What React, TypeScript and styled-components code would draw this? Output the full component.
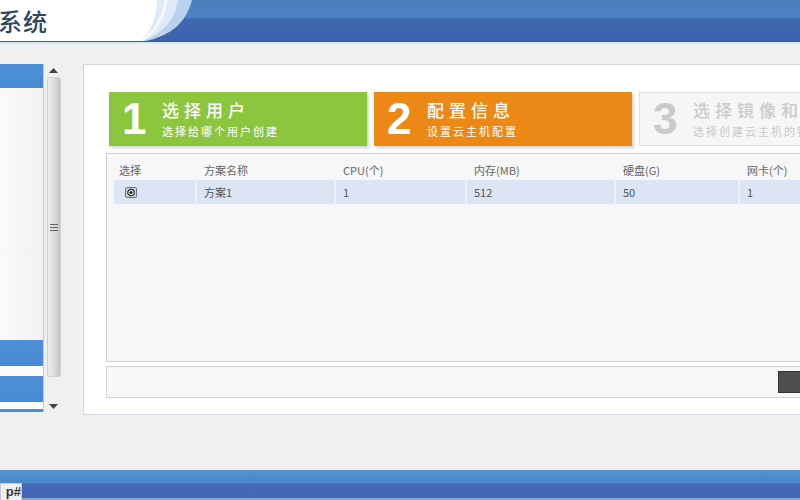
import React from "react";
import styled, { createGlobalStyle } from "styled-components";

const Global = createGlobalStyle`
  html, body { margin: 0; padding: 0; }
  body {
    width: 800px; height: 500px; overflow: hidden;
    font-family: "Noto Sans CJK SC", "Liberation Sans", sans-serif;
    background: #f0f0f0;
  }
`;

const Page = styled.div`
  width: 800px; height: 500px; display: flex; flex-direction: column; overflow: hidden;
`;

const Header = styled.header`
  height: 41px; flex-shrink: 0; display: flex;
  background: linear-gradient(to bottom, #4c7dbd 0%, #4b84c4 42%, #4068b1 46%, #3e62ad 100%);
  border-bottom: 1px solid #3d5c8e;
`;

const Brand = styled.div`
  width: 140px; background: #fff; display: flex; align-items: center;
`;

const Title = styled.h1`
  margin: 0 0 0 -2px; font-size: 24px; font-weight: 500; color: #2c4866;
  letter-spacing: 1px; line-height: 41px;
`;

const HeaderLine = styled.div`
  height: 2px; flex-shrink: 0; background: #d4e9f3;
`;

const Body = styled.main`
  flex: 1; display: flex; align-items: flex-start; padding-top: 20px; overflow: hidden;
  background: #f0f0f0;
`;

const Sidebar = styled.aside`
  width: 43px; flex-shrink: 0; display: flex; flex-direction: column;
  border-right: 1px solid #c9c9c9;
`;

const SideHead = styled.div<{ h: number }>`
  height: ${(p) => p.h}px;
  background: linear-gradient(to bottom, #4f8fd8, #468ad4);
`;

const SidePanel = styled.div<{ h: number }>`
  height: ${(p) => p.h}px;
  background: linear-gradient(to right, #fafafa, #f1f1f1);
`;

const SideGap = styled.div<{ h: number }>`
  height: ${(p) => p.h}px; background: #fbfbfb;
`;

const Scrollbar = styled.div`
  width: 15px; margin-left: 2px; height: 348px; display: flex; flex-direction: column;
  align-items: center; flex-shrink: 0;
`;

const Arrow = styled.div`
  height: 12px; width: 15px; display: flex; align-items: center; justify-content: center;
`;

const Thumb = styled.div`
  width: 14px; height: 300px; margin-top: 1px; border-radius: 3px;
  background: linear-gradient(to right, #ececec, #dcdcdc 50%, #c4c4c4);
  border: 1px solid #d0d0d0; box-sizing: border-box;
  display: flex; align-items: center; justify-content: center;
`;

const Track = styled.div`
  flex: 1;
`;

const Main = styled.section`
  margin-left: 22px; width: 760px; flex-shrink: 0;
  background: #fff; border: 1px solid #cfd9e3;
  padding: 27px 22px 16px 22px; box-sizing: border-box;
  overflow: hidden;
`;

const Steps = styled.div`
  display: flex; gap: 7px; margin-left: 3px; height: 54px;
`;

const Step = styled.div<{ bg: string; muted?: boolean }>`
  width: 258px; flex-shrink: 0; height: 54px; box-sizing: border-box;
  display: flex; align-items: center; padding-left: 13px;
  background: ${(p) => p.bg};
  color: ${(p) => (p.muted ? "#cacaca" : "#fff")};
  border: ${(p) => (p.muted ? "1px solid #dedede" : "none")};
  box-shadow: ${(p) => (p.muted ? "none" : "2px 2px 3px rgba(0,0,0,0.18)")};
`;

const StepNum = styled.div`
  font-family: "Liberation Sans", Arial, sans-serif; font-weight: 700;
  font-size: 44px; line-height: 54px; width: 40px;
`;

const StepText = styled.div`
  display: flex; flex-direction: column;
`;

const StepTitle = styled.div`
  font-size: 17px; line-height: 22px; letter-spacing: 5px; font-weight: 500;
`;

const StepSub = styled.div`
  font-size: 11px; line-height: 16px; letter-spacing: 2px; margin-top: 2px;
`;

const TableBox = styled.div`
  margin-top: 7px; height: 209px; box-sizing: border-box;
  border: 1px solid #cfcfcf; background: #f7f7f7;
  padding: 6px 0 0 7px;
`;

const cols = "83px 139px 131px 149px 124px 120px";

const HeadRow = styled.div`
  display: grid; grid-template-columns: ${cols}; height: 20px; align-items: center;
`;

const HeadCell = styled.div<{ pl?: number }>`
  font-size: 11px; color: #666; padding-left: ${(p) => p.pl ?? 7}px;
`;

const DataRow = styled.div`
  display: grid; grid-template-columns: ${cols}; height: 24px;
`;

const DataCell = styled.div<{ pl?: number }>`
  font-size: 11px; color: #555; background: #dbe5f3;
  border-right: 2px solid #edf2f9; display: flex; align-items: center;
  padding-left: ${(p) => p.pl ?? 7}px;
  font-family: "Noto Sans CJK SC", "Liberation Sans", sans-serif;
`;

const Toolbar = styled.div`
  margin-top: 4px; height: 32px; box-sizing: border-box;
  border: 1px solid #d4d4d4; background: #f7f7f7;
  display: flex; align-items: center; justify-content: flex-end; padding-right: 7px;
`;

const DarkButton = styled.button`
  width: 34px; height: 22px; background: #4f4f4f; border: 1px solid #333; padding: 0;
`;

const Footer = styled.footer`
  height: 30px; flex-shrink: 0; display: flex; align-items: flex-end;
  border-top: 1px solid #e6f3f8;
  background: linear-gradient(to bottom, #5392cc 0%, #4b88c7 42%, #4569b6 46%, #4367b6 92%, #86aad6 93%);
`;

const Tab = styled.div`
  height: 17px; width: 22px; background: #eef0f2; border: 1px solid #c8ccd2; border-bottom: none;
  box-sizing: border-box; font-family: "Liberation Sans", Arial, sans-serif;
  font-weight: 700; font-size: 13px; line-height: 16px; color: #333; overflow: hidden;
  white-space: nowrap; display: flex; justify-content: flex-end;
`;

const HeaderCurve = () => (
  <svg width="60" height="41" viewBox="0 0 60 41">
    <path d="M0 0 L52 0 Q44 33 6 41 L0 41 Z" fill="#b9d2ee" />
    <path d="M0 0 L38 0 Q33 30 3 41 L0 41 Z" fill="#dfeaf7" />
    <path d="M0 0 L17 0 Q16 28 0 41 Z" fill="#ffffff" />
    <path d="M26 0 Q22 28 1 41" stroke="#f5f9fd" strokeWidth="3" fill="none" />
  </svg>
);

const RadioIcon = () => (
  <svg width="12" height="11" viewBox="0 0 12 11">
    <rect x="0.5" y="0.5" width="11" height="10" rx="1.5" fill="#c9d3e2" stroke="#6a7384" />
    <circle cx="6" cy="5.5" r="3.2" fill="#fff" stroke="#222" strokeWidth="1.2" />
    <circle cx="6" cy="5.5" r="1.6" fill="#222" />
  </svg>
);

const UpArrow = () => (
  <svg width="9" height="5" viewBox="0 0 9 5"><path d="M0 5 L4.5 0 L9 5 Z" fill="#444" /></svg>
);
const DownArrow = () => (
  <svg width="9" height="5" viewBox="0 0 9 5"><path d="M0 0 L4.5 5 L9 0 Z" fill="#444" /></svg>
);
const Grip = () => (
  <svg width="8" height="7" viewBox="0 0 8 7">
    <path d="M0 0.5 H8 M0 3.5 H8 M0 6.5 H8" stroke="#666" strokeWidth="1" />
  </svg>
);

const steps = [
  { n: "1", t: "选择用户", s: "选择给哪个用户创建", bg: "#8cc63f" },
  { n: "2", t: "配置信息", s: "设置云主机配置", bg: "#ec8916" },
  { n: "3", t: "选择镜像和网络", s: "选择创建云主机的镜像", bg: "#f6f6f6", muted: true },
];

const heads = ["选择", "方案名称", "CPU(个)", "内存(MB)", "硬盘(G)", "网卡(个)"];
const row = ["方案1", "1", "512", "50", "1"];

export default function App() {
  return (
    <Page>
      <Global />
      <Header>
        <Brand>
          <Title>系统</Title>
        </Brand>
        <HeaderCurve />
      </Header>
      <HeaderLine />
      <Body>
        <Sidebar>
          <SideHead h={24} />
          <SidePanel h={252} />
          <SideHead h={26} />
          <SideGap h={10} />
          <SideHead h={26} />
          <SideGap h={7} />
          <SideHead h={3} />
        </Sidebar>
        <Scrollbar>
          <Arrow><UpArrow /></Arrow>
          <Thumb><Grip /></Thumb>
          <Track />
          <Arrow><DownArrow /></Arrow>
        </Scrollbar>
        <Main>
          <Steps>
            {steps.map((s) => (
              <Step key={s.n} bg={s.bg} muted={s.muted}>
                <StepNum>{s.n}</StepNum>
                <StepText>
                  <StepTitle>{s.t}</StepTitle>
                  <StepSub>{s.s}</StepSub>
                </StepText>
              </Step>
            ))}
          </Steps>
          <TableBox>
            <HeadRow>
              {heads.map((h, i) => (
                <HeadCell key={h} pl={i === 0 ? 5 : 7}>{h}</HeadCell>
              ))}
            </HeadRow>
            <DataRow>
              <DataCell pl={11}><RadioIcon /></DataCell>
              {row.map((c, i) => (
                <DataCell key={i}>{c}</DataCell>
              ))}
            </DataRow>
          </TableBox>
          <Toolbar>
            <DarkButton aria-label="next" />
          </Toolbar>
        </Main>
      </Body>
      <Footer>
        <Tab>p#</Tab>
      </Footer>
    </Page>
  );
}
